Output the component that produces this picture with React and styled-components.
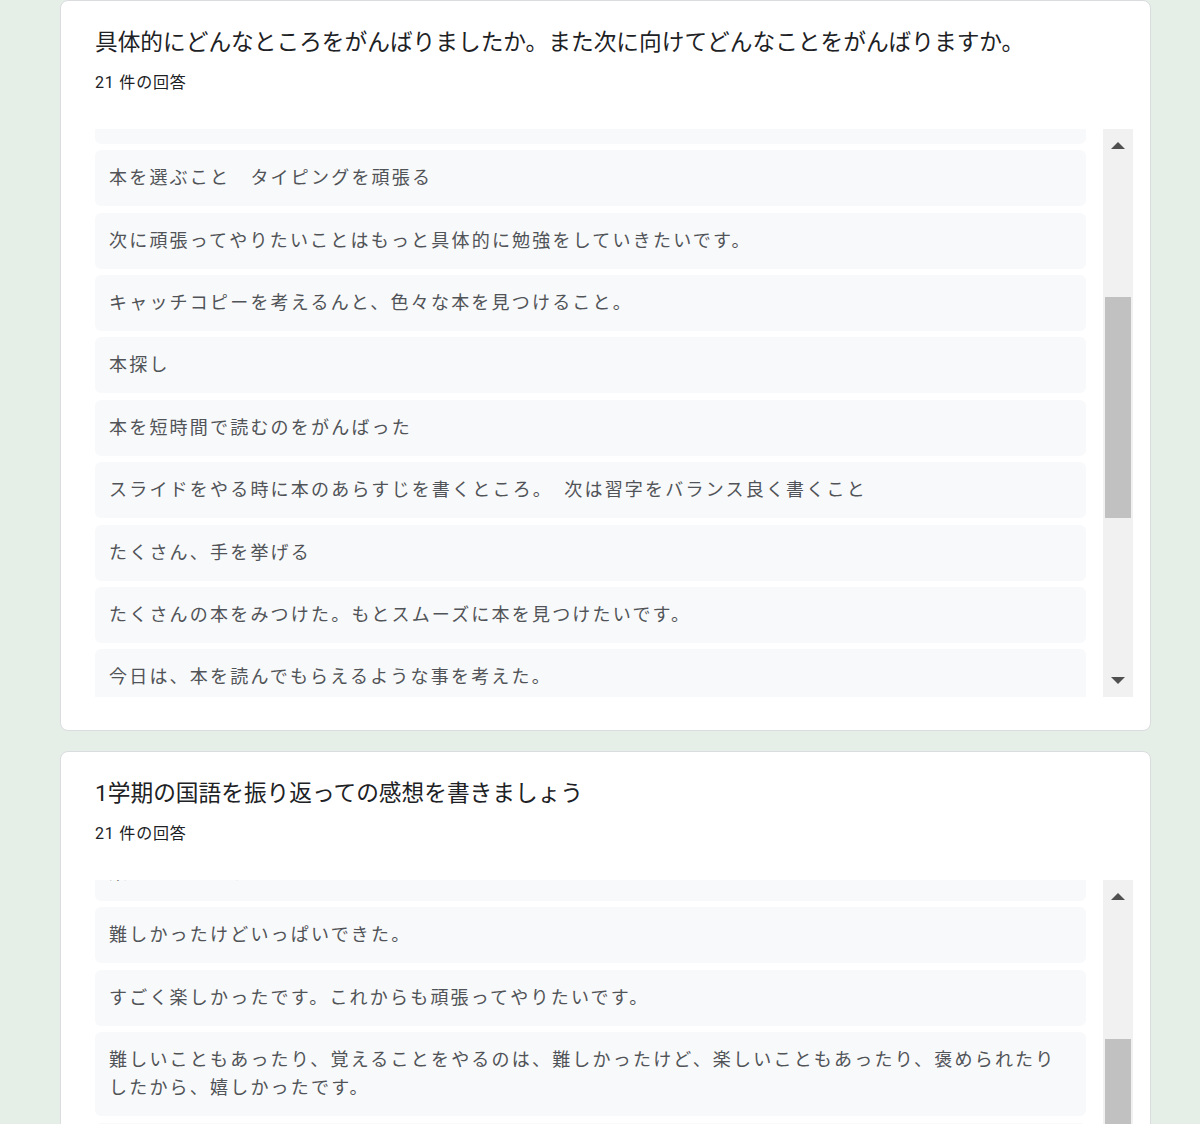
import { useLayoutEffect, useRef } from "react";
import styled, { createGlobalStyle } from "styled-components";

const questions = [
	{
		title: "具体的にどんなところをがんばりましたか。また次に向けてどんなことをがんばりますか。",
		count: 21,
		first: 3,
		offset: 21,
		thumbTop: 135,
		thumbHeight: 221,
		answers: [
			"音読をがんばった",
			"みんなの前で発表すること",
			"本の紹介文を書くこと",
			"本を選ぶこと　タイピングを頑張る",
			"次に頑張ってやりたいことはもっと具体的に勉強をしていきたいです。",
			"キャッチコピーを考えるんと、色々な本を見つけること。",
			"本探し",
			"本を短時間で読むのをがんばった",
			"スライドをやる時に本のあらすじを書くところ。　次は習字をバランス良く書くこと",
			"たくさん、手を挙げる",
			"たくさんの本をみつけた。もとスムーズに本を見つけたいです。",
			"今日は、本を読んでもらえるような事を考えた。",
			"字をていねいに書くこと",
			"友だちと協力すること",
		],
	},
	{
		title: "1学期の国語を振り返っての感想を書きましょう",
		count: 21,
		first: 1,
		offset: 27,
		thumbTop: 126,
		thumbHeight: 221,
		answers: [
			"楽しかったです。",
			"難しかったけどいっぱいできた。",
			"すごく楽しかったです。これからも頑張ってやりたいです。",
			"難しいこともあったり、覚えることをやるのは、難しかったけど、楽しいこともあったり、褒められたりしたから、嬉しかったです。",
			"本をたくさん読めてよかったです。",
			"漢字をたくさん覚えられてよかったです。",
			"発表が楽しかった。",
			"いろいろな本を読めて楽しかった。",
			"スライドを作るのが楽しかったです。",
			"2学期もがんばりたいです。",
			"音読が上手になった。",
		],
	},
];

export default function App() {
	return (
		<>
			<GlobalStyle />
			<Page>
				{questions.map((q) => (
					<Card key={q.title}>
						<Title>{q.title}</Title>
						<Count>{q.count} 件の回答</Count>
						<ResponseList {...q} />
					</Card>
				))}
			</Page>
		</>
	);
}

function ResponseList({ answers, first, offset, thumbTop, thumbHeight }) {
	const viewRef = useRef(null);

	// scroll the list so it sits where the screenshot was taken
	useLayoutEffect(() => {
		const view = viewRef.current;
		const item = view.firstChild.children[first];
		view.scrollTop = item.offsetTop - offset;
	}, [first, offset]);

	return (
		<ListArea>
			<Viewport ref={viewRef}>
				<Items>
					{answers.map((a, i) => (
						<Answer key={i}>{a}</Answer>
					))}
				</Items>
			</Viewport>
			<Track>
				<ArrowButton>
					<Arrow $dir="up" />
				</ArrowButton>
				<ThumbZone>
					<Thumb $top={thumbTop} $height={thumbHeight} />
				</ThumbZone>
				<ArrowButton>
					<Arrow $dir="down" />
				</ArrowButton>
			</Track>
		</ListArea>
	);
}

const GlobalStyle = createGlobalStyle`
	body {
		margin: 0;
		background: #e6efe7;
		font-family: Roboto, "Noto Sans CJK JP", sans-serif;
	}
`;

const Page = styled.div`
	display: flex;
	flex-direction: column;
	gap: 20px;
	padding-left: 60px;
	width: 1091px;
`;

const Card = styled.div`
	background: #fff;
	border: 1px solid #dadce0;
	border-radius: 8px;
	padding: 26px 17px 33px 34px;
`;

const Title = styled.div`
	font-size: 22.7px;
	line-height: 32px;
	color: #202124;
	white-space: nowrap;
	margin-bottom: 12px;
`;

const Count = styled.div`
	font-size: 16px;
	line-height: 24px;
	letter-spacing: 0.8px;
	color: #202124;
	margin-bottom: 34px;
`;

const ListArea = styled.div`
	display: flex;
	gap: 17px;
	height: 568px;
`;

const Viewport = styled.div`
	position: relative;
	flex: 1;
	overflow: hidden;
`;

const Items = styled.div`
	display: flex;
	flex-direction: column;
	gap: 6.4px;
`;

const Answer = styled.div`
	background: #f8f9fa;
	border-radius: 6px;
	padding: 14px 14px;
	font-size: 18px;
	line-height: 28px;
	letter-spacing: 2.2px;
	color: #505357;
`;

const Track = styled.div`
	width: 30px;
	background: #f1f1f1;
	display: flex;
	flex-direction: column;
`;

const ArrowButton = styled.div`
	height: 33px;
	display: flex;
	align-items: center;
	justify-content: center;
`;

const Arrow = styled.div`
	width: 0;
	height: 0;
	border-left: 7px solid transparent;
	border-right: 7px solid transparent;
	${({ $dir }) =>
		$dir === "up" ? "border-bottom: 7px solid #505050;" : "border-top: 7px solid #505050;"}
`;

const ThumbZone = styled.div`
	flex: 1;
	padding: 0 2px;
	overflow: hidden;
`;

const Thumb = styled.div`
	margin-top: ${({ $top }) => $top}px;
	height: ${({ $height }) => $height}px;
	background: #c1c1c1;
`;
